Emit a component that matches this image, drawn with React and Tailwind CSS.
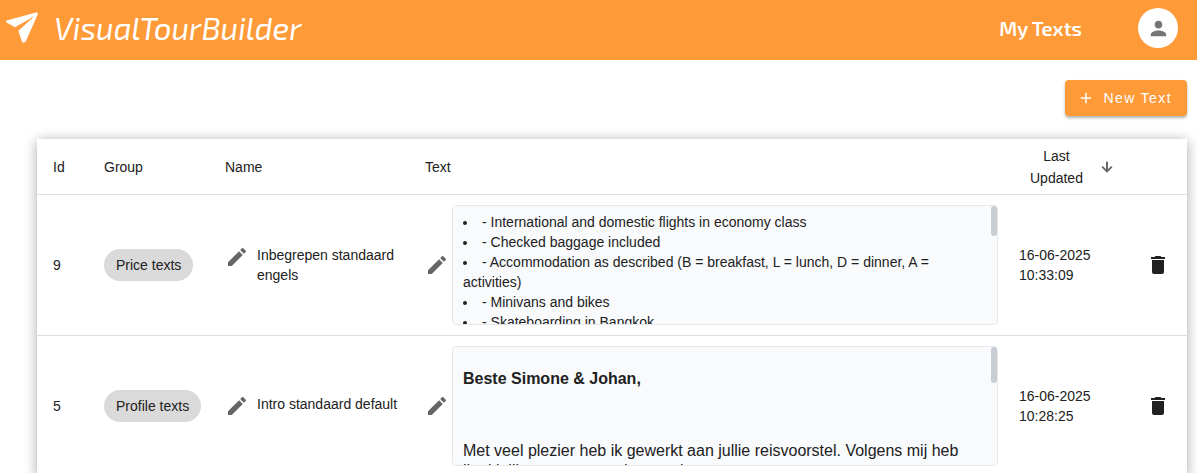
import React from "react";
import { MdAdd, MdDelete, MdEdit, MdPerson } from "react-icons/md";

const GREETING = (
  <div className="text-base leading-5">
    <p className="my-4 font-bold">Beste Simone &amp; Johan,</p>
    <p className="my-4">&nbsp;</p>
    <p className="my-4">
      Met veel plezier heb ik gewerkt aan jullie reisvoorstel. Volgens mij heb ik al jullie wensen goed verwerkt.
    </p>
  </div>
);

const INCLUDED = (
  <ul className="list-disc list-inside">
    <li>- International and domestic flights in economy class</li>
    <li>- Checked baggage included</li>
    <li>- Accommodation as described (B = breakfast, L = lunch, D = dinner, A = activities)</li>
    <li>- Minivans and bikes</li>
    <li>- Skateboarding in Bangkok</li>
  </ul>
);

const texts = [
  {
    id: 9,
    group: "Price texts",
    name: "Inbegrepen standaard engels",
    body: INCLUDED,
    thumb: "h-[30px]",
    date: "16-06-2025",
    time: "10:33:09",
  },
  {
    id: 5,
    group: "Profile texts",
    name: "Intro standaard default",
    body: GREETING,
    thumb: "h-9",
    date: "16-06-2025",
    time: "10:28:25",
  },
];

const Logo = () => (
  <svg viewBox="0 0 32 32" className="size-8 shrink-0" fill="currentColor" aria-hidden="true">
    <path d="M.6 8.600 30 .6Q32.600.3 31.700 2.600L20.200 28.600Q18.200 32.200 16 29.800L12.400 18.800 28.400 4.200 9 15.200.6 10.600Q-.6 9.400.6 8.600Z" />
  </svg>
);

const Header = () => (
  <header className="flex h-[60px] shrink-0 items-center bg-[#ff9a38] pl-1.5 pr-[19px] text-white">
    <a href="#" className="flex items-center gap-4 pb-1 font-['Exo_2','Noto_Sans',sans-serif] text-[31px] italic leading-10">
      <Logo />
      VisualTourBuilder
    </a>
    <a href="#" className="mb-1 ml-auto font-['Exo_2','Noto_Sans',sans-serif] text-xl font-semibold">
      My Texts
    </a>
    <button
      type="button"
      aria-label="Account"
      className="mb-1 ml-14 flex size-10 items-center justify-center rounded-full bg-white text-[#757575]"
    >
      <MdPerson size={23} />
    </button>
  </header>
);

const TextRow = ({ text }) => (
  <tr className="border-t border-[#dedede]">
    <td className="pl-4">{text.id}</td>
    <td className="pl-4">
      <span className="inline-flex h-8 items-center rounded-full bg-[#dadada] px-3">{text.group}</span>
    </td>
    <td className="pl-4">
      <div className="flex items-start gap-2">
        <button type="button" aria-label="Edit name" className="shrink-0 text-[#666]">
          <MdEdit size={24} />
        </button>
        <span>{text.name}</span>
      </div>
    </td>
    <td className="py-2.5 pl-4 pr-1">
      <div className="flex items-center gap-[3px]">
        <button type="button" aria-label="Edit text" className="shrink-0 text-[#666]">
          <MdEdit size={24} />
        </button>
        <div className="relative min-w-0 grow">
          <div className="h-[120px] overflow-y-auto rounded border border-[#e5e7eb] bg-[#f8fafc] py-1.5 pl-2.5 pr-6 [scrollbar-width:none]">
            {text.body}
          </div>
          <div className={`absolute right-px top-px w-1.5 rounded-full bg-[#c8cdd4] ${text.thumb}`} />
        </div>
      </div>
    </td>
    <td className="pl-[17px]">
      {text.date}
      <br />
      {text.time}
    </td>
    <td className="pl-3">
      <button type="button" aria-label="Delete text" className="block">
        <MdDelete size={24} />
      </button>
    </td>
  </tr>
);

const App = () => {
  return (
    <div className="flex h-screen flex-col bg-white font-['Liberation_Sans',sans-serif] text-sm leading-5 text-[#212121]">
      <Header />
      <main className="grow overflow-y-auto pb-10 pl-[37px] pr-2.5 pt-5 [scrollbar-width:none]">
        <div className="flex justify-end">
          <button
            type="button"
            className="flex h-9 items-center gap-2 rounded bg-[#ff9a38] px-3 pr-[15px] tracking-widest text-white shadow-[0_2px_3px_rgba(0,0,0,0.3)]"
          >
            <MdAdd size={18} />
            New Text
          </button>
        </div>

        <div className="mt-[23px] bg-white shadow-[0_2px_12px_rgba(0,0,0,0.35)]">
          <table className="w-full table-fixed border-collapse text-left">
            <colgroup>
              <col className="w-[51px]" />
              <col className="w-[121px]" />
              <col className="w-[200px]" />
              <col />
              <col className="w-[132px]" />
              <col className="w-[53px]" />
            </colgroup>
            <thead>
              <tr className="h-[55px]">
                <th className="pl-4 pt-0.5 font-normal">Id</th>
                <th className="pl-4 pt-0.5 font-normal">Group</th>
                <th className="pl-4 pt-0.5 font-normal">Name</th>
                <th className="pl-4 pt-0.5 font-normal">Text</th>
                <th className="pl-7 pt-0.5 font-normal">
                  <button type="button" className="flex items-center gap-4 text-center leading-[22px]">
                    <span>
                      Last
                      <br />
                      Updated
                    </span>
                    <svg viewBox="0 0 24 24" className="size-4 text-[#666]" fill="currentColor" aria-hidden="true">
                      <path d="M10.500 4h3v11.200l4.700-4.700 2 2L12 20.500l-8.200-8 2-2 4.700 4.700V4Z" />
                    </svg>
                  </button>
                </th>
                <th aria-label="Actions" />
              </tr>
            </thead>
            <tbody>
              {texts.map((text) => (
                <TextRow key={text.id} text={text} />
              ))}
            </tbody>
          </table>
        </div>
      </main>
    </div>
  );
};

export default App;
